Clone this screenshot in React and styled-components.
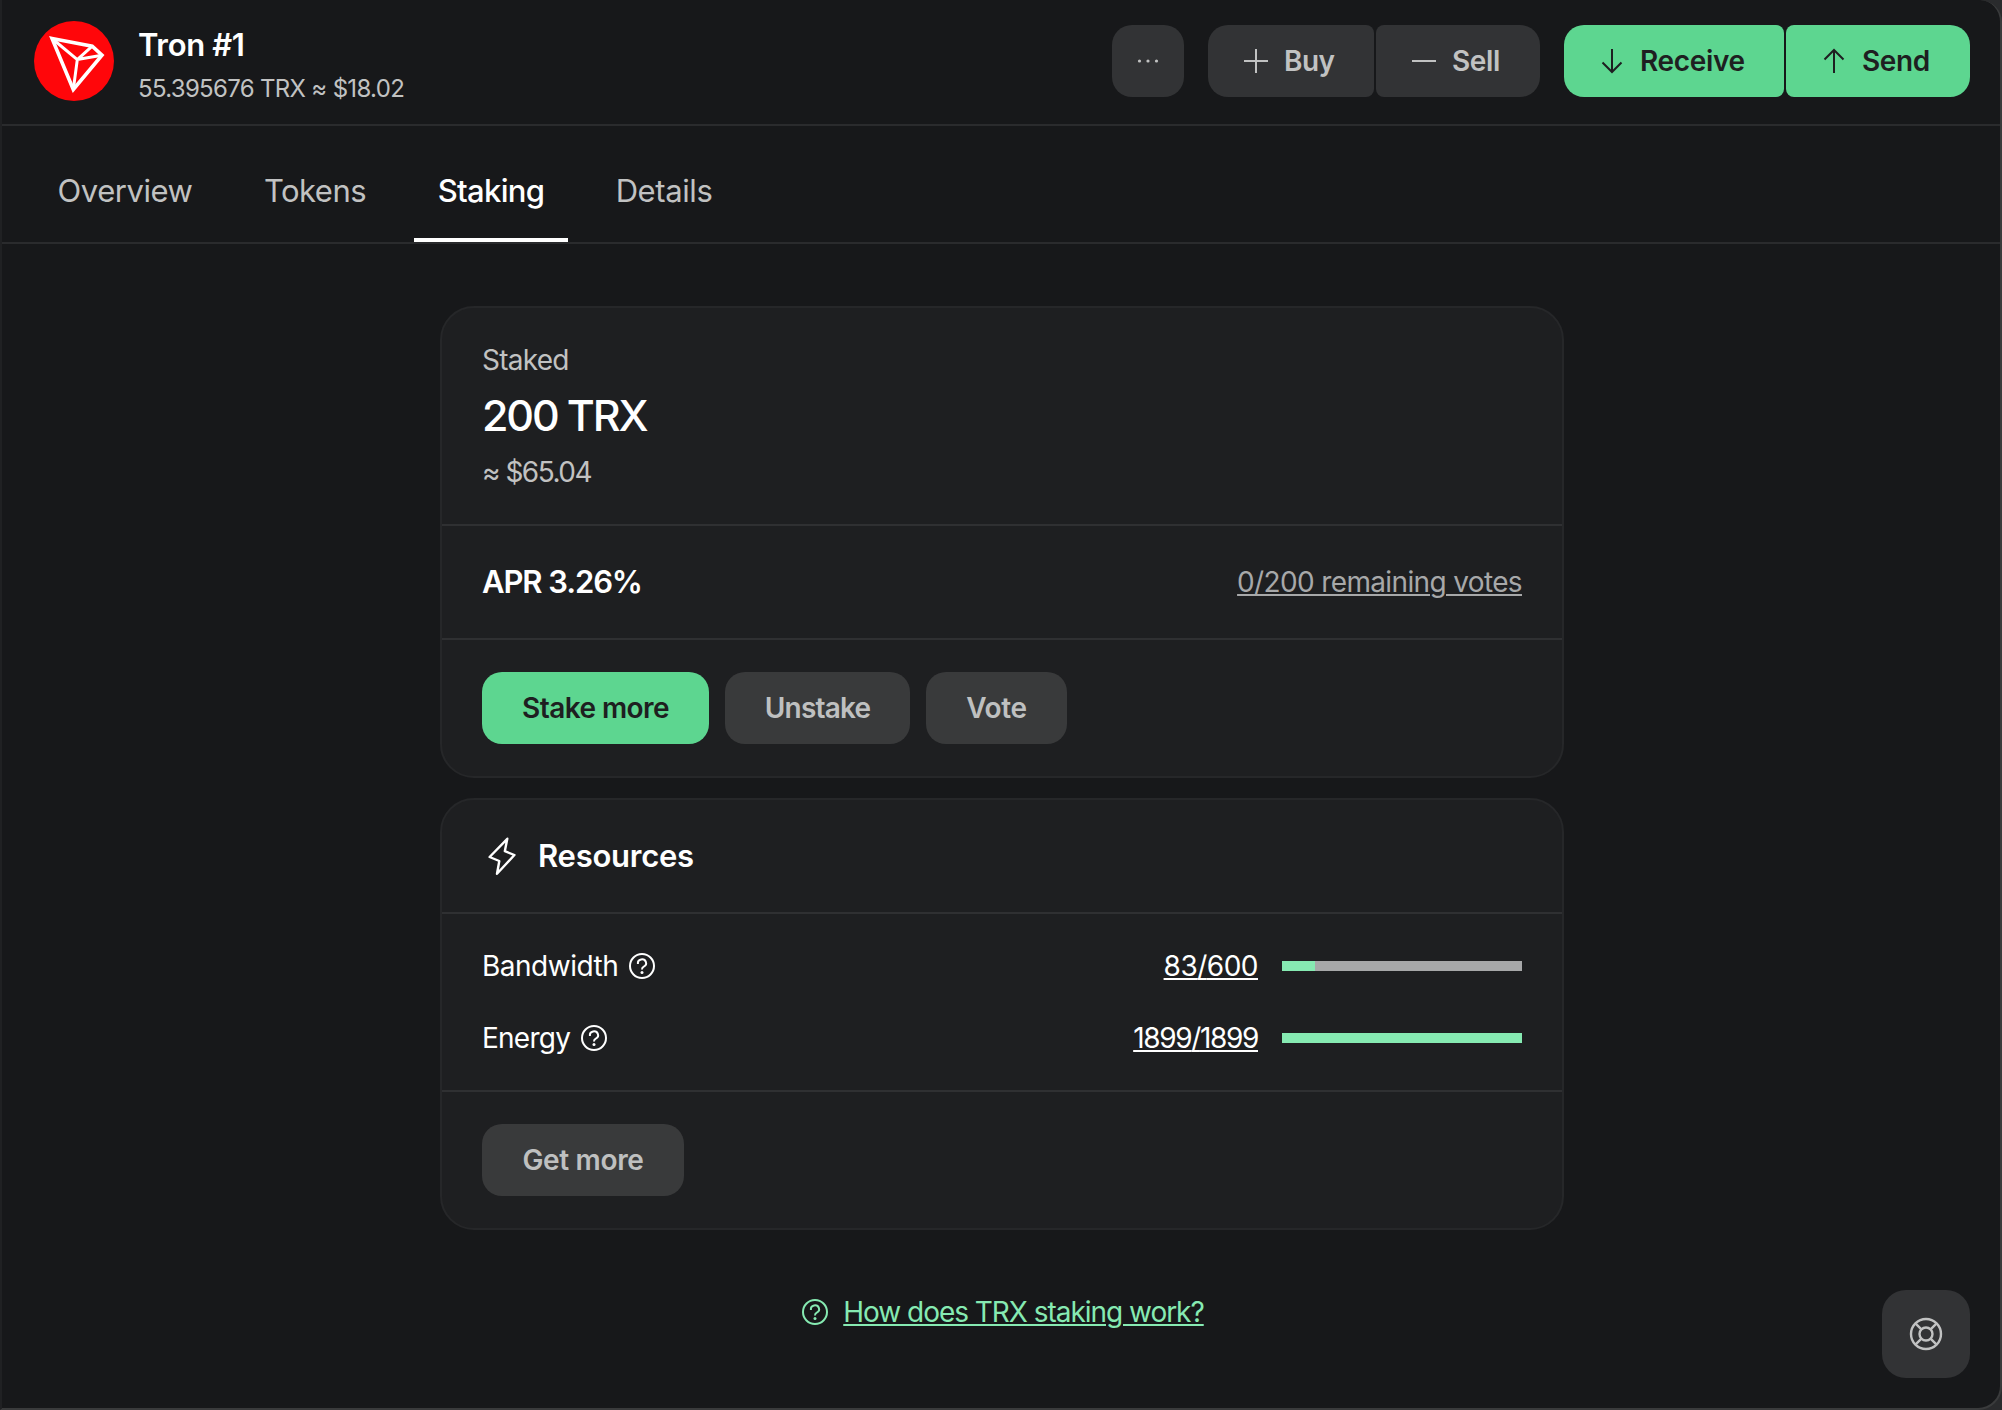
import React from "react";
import styled, { createGlobalStyle, css } from "styled-components";

const GlobalStyle = createGlobalStyle`
  * {
    box-sizing: border-box;
  }
  body {
    margin: 0;
    background: #2a2b2d;
    font-family: Inter, "Liberation Sans", sans-serif;
    color: #ffffff;
  }
  button {
    font-family: inherit;
    border: none;
    cursor: pointer;
  }
`;

const Window = styled.div`
  position: relative;
  width: 2002px;
  height: 1410px;
  background: #17181a;
  border: 2px solid #3a3b3c;
  border-top: none;
  border-left-color: #202123;
  border-radius: 0 22px 24px 0;
  overflow: hidden;
`;

const Text = styled.span`
  font-size: ${({ $size }) => $size || 28}px;
  font-weight: ${({ $weight }) => $weight || 400};
  line-height: ${({ $line }) => $line || 36}px;
  letter-spacing: ${({ $track }) => $track || 0}px;
  color: ${({ $color }) => $color || "#ffffff"};
  white-space: nowrap;
`;

const Header = styled.header`
  display: flex;
  align-items: flex-start;
  height: 126px;
  padding: 21px 30px 0 32px;
  border-bottom: 2px solid #2a2b2d;
`;

const Account = styled.div`
  display: flex;
  flex-direction: column;
  margin: 2px auto 0 24px;
`;

const Actions = styled.div`
  display: flex;
  gap: 24px;
  margin-top: 4px;
`;

const Group = styled.div`
  display: flex;
  gap: 2px;

  & > button:first-child:not(:last-child) {
    border-radius: 20px 8px 8px 20px;
  }
  & > button:last-child:not(:first-child) {
    border-radius: 8px 20px 20px 8px;
  }
`;

const variants = {
  primary: css`
    background: #5dd690;
    color: #1e1f21;
  `,
  header: css`
    background: #323335;
    color: #c1c2c2;
  `,
  secondary: css`
    background: #393a3b;
    color: #bfc0c0;
  `,
};

const Button = styled.button`
  display: flex;
  align-items: center;
  justify-content: ${({ $icon }) => ($icon ? "flex-start" : "center")};
  gap: 12px;
  width: ${({ $width }) => $width}px;
  height: 72px;
  padding: 0 0 0 ${({ $icon }) => ($icon ? 32 : 0)}px;
  border-radius: 20px;
  font-size: 28px;
  font-weight: 600;
  letter-spacing: ${({ $track }) => $track || -0.35}px;
  white-space: nowrap;
  ${({ $variant }) => variants[$variant]}
`;

const Tabs = styled.nav`
  display: flex;
  gap: 24px;
  height: 118px;
  padding-left: 32px;
  border-bottom: 2px solid #2a2b2d;
`;

const Tab = styled.a`
  display: flex;
  align-items: center;
  justify-content: center;
  width: ${({ $width }) => $width}px;
  height: 116px;
  padding-top: 17px;
  border-bottom: 4px solid ${({ $active }) => ($active ? "#ffffff" : "transparent")};
`;

const Main = styled.main`
  display: flex;
  flex-direction: column;
  gap: 20px;
  width: 1124px;
  margin: 62px 0 0 438px;
`;

const Card = styled.section`
  border: 2px solid #262729;
  border-radius: 34px;
  background: #1e1f21;
`;

const Section = styled.div`
  display: flex;
  flex-direction: ${({ $column }) => ($column ? "column" : "row")};
  align-items: ${({ $column }) => ($column ? "stretch" : "center")};
  gap: ${({ $gap }) => $gap || 0}px;
  height: ${({ $height }) => $height}px;
  padding: ${({ $top }) => $top || 0}px 40px 0;

  & + & {
    border-top: 2px solid #2f3032;
  }
`;

const Row = styled.div`
  display: flex;
  align-items: center;
  height: 72px;
`;

const Link = styled.a`
  font-size: 28px;
  line-height: 36px;
  letter-spacing: ${({ $track }) => $track || 0}px;
  color: ${({ $color }) => $color || "#ffffff"};
  text-decoration: underline;
  text-decoration-thickness: 2px;
  text-underline-offset: 2px;
  white-space: nowrap;
  margin-left: ${({ $push }) => ($push ? "auto" : 0)};
  cursor: pointer;
`;

const Track = styled.div`
  width: 240px;
  height: 10px;
  margin-left: 24px;
  background: #a7a8a9;
`;

const Fill = styled.div`
  height: 100%;
  background: #86eab2;
`;

const Help = styled.div`
  display: flex;
  align-items: center;
  justify-content: center;
  gap: 15px;
  margin-top: 42px;
  padding-left: 2px;
  height: 40px;
`;

const Support = styled.button`
  position: absolute;
  right: 30px;
  bottom: 30px;
  display: flex;
  align-items: center;
  justify-content: center;
  width: 88px;
  height: 88px;
  padding: 0;
  border-radius: 24px;
  background: #323335;
  color: #c1c2c2;
`;

const HelpSvg = styled.svg`
  flex-shrink: 0;
  margin-left: ${({ $space }) => $space || 0}px;
`;

const TronLogo = () => (
  <svg width="80" height="80" viewBox="0 0 80 80">
    <circle cx="40" cy="40" r="40" fill="#ff060a" />
    <g fill="none" stroke="#ffffff" strokeLinejoin="miter">
      <path d="M18 17.5 58.2 25.2 68 34.2 39.3 68.5Z" strokeWidth="3.6" />
      <path d="M18 17.5 43.3 38.6 39.3 68.5M43.3 38.6 58.2 25.2M43.3 38.6 68 34.2" strokeWidth="3" />
    </g>
  </svg>
);

const icons = {
  plus: "M4 16h24M16 4v24",
  minus: "M4 16h24",
  down: "M16 4v23M6.5 17.5 16 27l9.5-9.5",
  up: "M16 28V5M6.5 14.5 16 5l9.5 9.5",
};

const Icon = ({ name }) => (
  <svg width="32" height="32" viewBox="0 0 32 32" fill="none" stroke="currentColor" strokeWidth="2">
    <path d={icons[name]} />
  </svg>
);

const Dots = () => (
  <svg width="32" height="32" viewBox="0 0 32 32" fill="currentColor">
    <circle cx="7.5" cy="16" r="1.6" />
    <circle cx="16" cy="16" r="1.6" />
    <circle cx="24.5" cy="16" r="1.6" />
  </svg>
);

const Bolt = () => (
  <svg width="40" height="40" viewBox="0 0 40 40" fill="none" stroke="#ffffff" strokeWidth="2.4" strokeLinejoin="round">
    <path d="M25.3 2.8 7.6 21l9.7 4-2.3 12.8L32.4 19l-9.6-3.8Z" />
  </svg>
);

const QuestionIcon = ({ color = "#ffffff", space }) => (
  <HelpSvg $space={space} width="26" height="26" viewBox="0 0 26 26" fill="none" stroke={color} strokeWidth="2">
    <circle cx="13" cy="13" r="12" />
    <path d="M8.9 11V10.6A4.1 3.8 0 1 1 14.8 13.6C13.5 14.2 13 14.8 13 16.4" />
    <circle cx="13" cy="19.5" r="1.5" fill={color} stroke="none" />
  </HelpSvg>
);

const Lifebuoy = () => (
  <svg width="36" height="36" viewBox="0 0 36 36" fill="none" stroke="currentColor" strokeWidth="2.4">
    <circle cx="18" cy="18" r="15" />
    <circle cx="18" cy="18" r="6.5" />
    <path d="M7.4 7.4l6 6M28.6 7.4l-6 6M7.4 28.6l6-6M28.6 28.6l-6-6" />
  </svg>
);

const tabs = [
  { label: "Overview", width: 182, track: -0.45 },
  { label: "Tokens", width: 150, track: -0.5 },
  { label: "Staking", width: 154, track: -0.7, active: true },
  { label: "Details", width: 144, track: -0.4 },
];

const resources = [
  { label: "Bandwidth", used: 83, total: 600, track: -0.5, valueTrack: -0.5 },
  { label: "Energy", used: 1899, total: 1899, track: -0.75, valueTrack: -1.35 },
];

const App = () => {
  return (
    <>
      <GlobalStyle />
      <Window>
        <Header>
          <TronLogo />
          <Account>
            <Text $size={31} $weight={600} $line={44} $track={-0.35}>Tron #1</Text>
            <Text $size={24} $line={44} $track={-0.68} $color="#c1c2c2">55.395676 TRX ≈ $18.02</Text>
          </Account>
          <Actions>
            <Button $variant="header" $width={72}><Dots /></Button>
            <Group>
              <Button $variant="header" $width={166} $track={-0.5} $icon><Icon name="plus" />Buy</Button>
              <Button $variant="header" $width={164} $icon><Icon name="minus" />Sell</Button>
            </Group>
            <Group>
              <Button $variant="primary" $width={220} $icon><Icon name="down" />Receive</Button>
              <Button $variant="primary" $width={184} $icon><Icon name="up" />Send</Button>
            </Group>
          </Actions>
        </Header>

        <Tabs>
          {tabs.map((tab) => (
            <Tab key={tab.label} $width={tab.width} $active={tab.active}>
              <Text $size={31} $track={tab.track} $weight={tab.active ? 500 : 400} $color={tab.active ? "#ffffff" : "#c1c2c2"}>
                {tab.label}
              </Text>
            </Tab>
          ))}
        </Tabs>

        <Main>
          <Card>
            <Section $column $height={216} $top={34}>
              <Text $track={-0.75} $color="#c1c2c2">Staked</Text>
              <Text $size={43} $weight={500} $line={75} $track={-2.15}>200 TRX</Text>
              <Text $line={38} $track={-1.5} $color="#c1c2c2">≈ $65.04</Text>
            </Section>
            <Section $height={114}>
              <Text $size={31} $weight={600} $track={-1.1}>APR 3.26%</Text>
              <Link $push $track={-0.64} $color="#a7a8a9">0/200 remaining votes</Link>
            </Section>
            <Section $height={138} $gap={16}>
              <Button $variant="primary" $width={227} $track={-0.57}>Stake more</Button>
              <Button $variant="secondary" $width={185} $track={-0.8}>Unstake</Button>
              <Button $variant="secondary" $width={141}>Vote</Button>
            </Section>
          </Card>

          <Card>
            <Section $height={112} $gap={16}>
              <Bolt />
              <Text $size={31} $weight={600} $track={-0.25}>Resources</Text>
            </Section>
            <Section $column $height={178} $top={16}>
              {resources.map(({ label, used, total, track, valueTrack }) => (
                <Row key={label}>
                  <Text $track={track}>{label}</Text>
                  <QuestionIcon space={11} />
                  <Link $push $track={valueTrack}>{used}/{total}</Link>
                  <Track>
                    <Fill style={{ width: `${(used / total) * 100}%` }} />
                  </Track>
                </Row>
              ))}
            </Section>
            <Section $height={138}>
              <Button $variant="secondary" $width={202}>Get more</Button>
            </Section>
          </Card>

          <Help>
            <QuestionIcon color="#86eab2" />
            <Link $track={-1.03} $color="#86eab2">How does TRX staking work?</Link>
          </Help>
        </Main>

        <Support><Lifebuoy /></Support>
      </Window>
    </>
  );
};

export default App;
